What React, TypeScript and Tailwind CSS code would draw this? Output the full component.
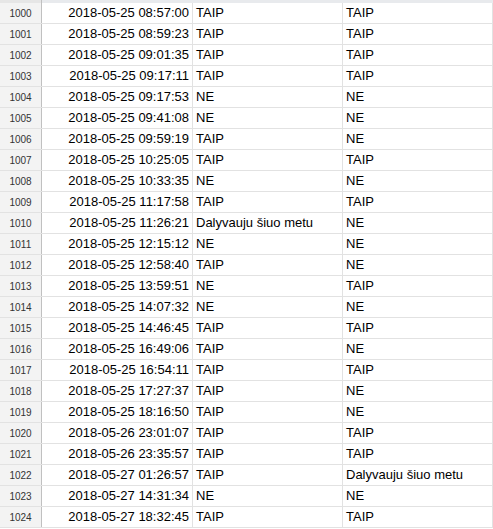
const rows: [number, string, string, string][] = [
  [1000, "2018-05-25 08:57:00", "TAIP", "TAIP"],
  [1001, "2018-05-25 08:59:23", "TAIP", "TAIP"],
  [1002, "2018-05-25 09:01:35", "TAIP", "TAIP"],
  [1003, "2018-05-25 09:17:11", "TAIP", "TAIP"],
  [1004, "2018-05-25 09:17:53", "NE", "NE"],
  [1005, "2018-05-25 09:41:08", "NE", "NE"],
  [1006, "2018-05-25 09:59:19", "TAIP", "NE"],
  [1007, "2018-05-25 10:25:05", "TAIP", "TAIP"],
  [1008, "2018-05-25 10:33:35", "NE", "NE"],
  [1009, "2018-05-25 11:17:58", "TAIP", "TAIP"],
  [1010, "2018-05-25 11:26:21", "Dalyvauju šiuo metu", "NE"],
  [1011, "2018-05-25 12:15:12", "NE", "NE"],
  [1012, "2018-05-25 12:58:40", "TAIP", "NE"],
  [1013, "2018-05-25 13:59:51", "NE", "TAIP"],
  [1014, "2018-05-25 14:07:32", "NE", "NE"],
  [1015, "2018-05-25 14:46:45", "TAIP", "TAIP"],
  [1016, "2018-05-25 16:49:06", "TAIP", "NE"],
  [1017, "2018-05-25 16:54:11", "TAIP", "TAIP"],
  [1018, "2018-05-25 17:27:37", "TAIP", "NE"],
  [1019, "2018-05-25 18:16:50", "TAIP", "NE"],
  [1020, "2018-05-26 23:01:07", "TAIP", "TAIP"],
  [1021, "2018-05-26 23:35:57", "TAIP", "TAIP"],
  [1022, "2018-05-27 01:26:57", "TAIP", "Dalyvauju šiuo metu"],
  [1023, "2018-05-27 14:31:34", "NE", "NE"],
  [1024, "2018-05-27 18:32:45", "TAIP", "TAIP"],
];

export default function App() {
  return (
    <div className="w-[493px] h-[529px] overflow-hidden bg-white font-['Liberation_Sans',Arial,sans-serif] text-[13px] text-black">
      {/* header sliver */}
      <div className="flex h-[3px]">
        <div className="w-[42px] bg-[#e6e6e6] border-r border-[#c0c0c0]" />
        <div className="flex-1 bg-[#e8eaed]" />
      </div>
      {rows.map(([n, date, a, b]) => (
        <div key={n} className="flex h-[21px] border-b border-[#e2e2e2]">
          <div className="w-[42px] shrink-0 flex items-center justify-center bg-[#f3f3f3] border-r border-[#c0c0c0] text-[10px] text-[#333]">
            {n}
          </div>
          <div className="w-[151px] shrink-0 flex items-center justify-end pr-[3px] border-r border-[#e2e2e2] whitespace-nowrap">
            {date}
          </div>
          <div className="w-[150px] shrink-0 flex items-center pl-[3px] border-r border-[#e2e2e2] whitespace-nowrap">
            {a}
          </div>
          <div className="w-[150px] shrink-0 flex items-center pl-[3px] border-r border-[#e2e2e2] whitespace-nowrap">
            {b}
          </div>
        </div>
      ))}
    </div>
  );
}
